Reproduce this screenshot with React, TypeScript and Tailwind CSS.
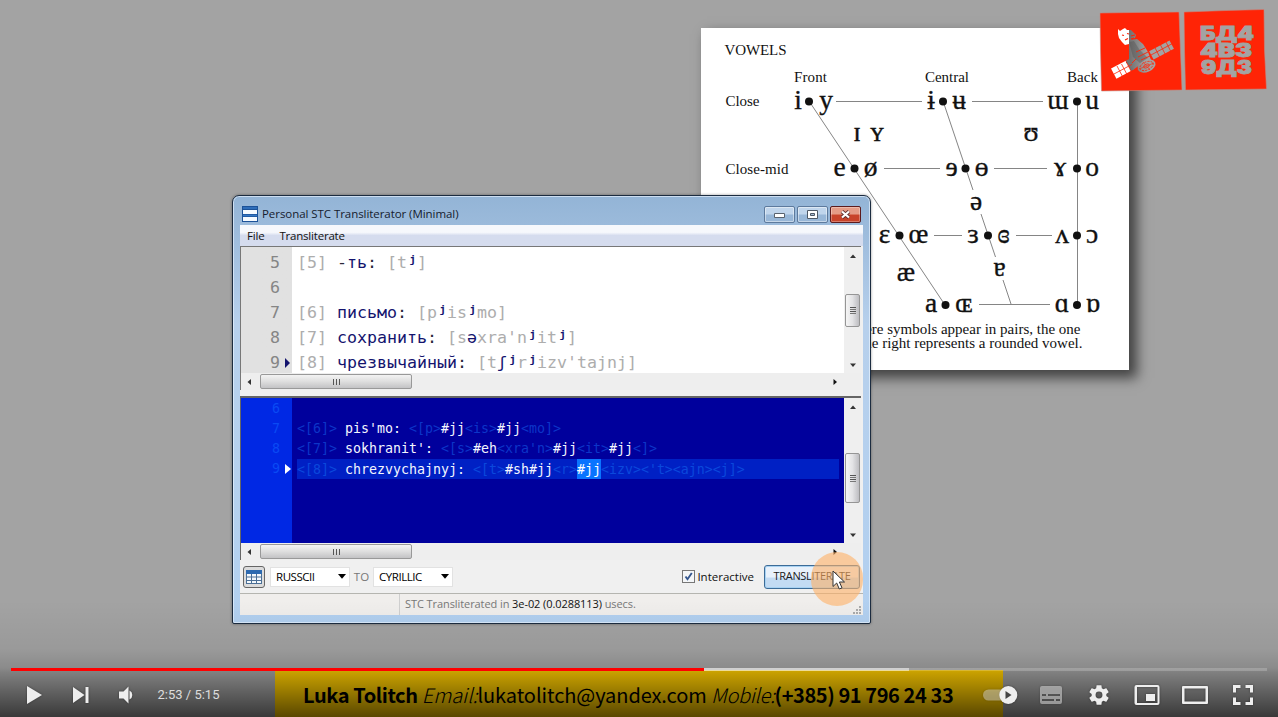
import type { ReactNode } from "react";

/* ---------- Vowel chart ---------- */

const glyphs: [string, number, number][] = [
  ["i", 798, 108.5], ["y", 826, 108.5], ["ɨ", 931, 108.5], ["ʉ", 959, 108.5], ["ɯ", 1058, 108.5], ["u", 1092, 108.5],
  ["ɪ", 857, 140.5], ["ʏ", 877, 140.5], ["ʊ", 1031, 140.5],
  ["e", 839.5, 175.5], ["ø", 870.5, 175.5], ["ɘ", 951.5, 175.5], ["ɵ", 981.5, 175.5], ["ɤ", 1060, 175.5], ["o", 1092, 175.5],
  ["ə", 976, 209.5],
  ["ɛ", 884.5, 242.5], ["œ", 918.5, 242.5], ["ɜ", 973, 242.5], ["ɞ", 1003.5, 242.5], ["ʌ", 1062, 242.5], ["ɔ", 1092, 242.5],
  ["æ", 906, 280.5], ["ɐ", 999.5, 275.5],
  ["a", 931, 311.5], ["ɶ", 964, 311.5], ["ɑ", 1062, 311.5], ["ɒ", 1093, 311.5],
];

const dots: [number, number][] = [
  [809, 101.5], [943, 101.5], [1077, 101.5],
  [854.5, 168.5], [965.5, 168.5], [1077, 168.5],
  [899.5, 235.5], [988, 235.5], [1077, 235.5],
  [945.5, 305], [1077, 305],
];

const lines: [number, number, number, number][] = [
  [836, 101.5, 922, 101.5], [972, 101.5, 1043, 101.5],
  [884, 168.5, 940, 168.5], [994, 168.5, 1047, 168.5],
  [934, 235.5, 962, 235.5], [1016, 235.5, 1052, 235.5],
  [979, 304.5, 1050, 304.5],
  [809, 101, 945, 305], [943, 101, 973, 190], [981, 214, 995.5, 257], [1003, 280, 1011, 304],
  [1077.5, 101, 1077.5, 305],
];

const labels: [string, number, number, number][] = [
  ["VOWELS", 724.5, 55, 62], ["Front", 794, 82, 33], ["Central", 925, 82, 44], ["Back", 1067, 82, 31],
  ["Close", 725.5, 106, 34], ["Close-mid", 725.5, 174, 63],
];

function VowelChart() {
  return (
    <div className="absolute left-[701px] top-[28px] h-[342px] w-[428px] bg-white shadow-[7px_7px_12px_1px_rgba(0,0,0,0.6)]">
      <svg
        viewBox="701 28 428 342"
        width="428"
        height="342"
        className="block font-['Liberation_Serif',serif]"
        fill="#111"
      >
        {lines.map(([a, b, c, d], i) => (
          <line key={i} x1={a} y1={b} x2={c} y2={d} stroke="#858585" strokeWidth="1" />
        ))}
        {dots.map(([x, y], i) => (
          <circle key={i} cx={x} cy={y} r="4" />
        ))}
        {glyphs.map(([g, x, y]) => (
          <text key={g} x={x} y={y} fontSize="27.5" textAnchor="middle" stroke="#111" strokeWidth="0.35">{g}</text>
        ))}
        {labels.map(([t, x, y, w]) => (
          <text key={t} x={x} y={y} fontSize="15" textLength={w}>{t}</text>
        ))}
        <text x="1080.5" y="333.5" fontSize="15" textAnchor="end">Where symbols appear in pairs, the one</text>
        <text x="1082.5" y="348" fontSize="15" textAnchor="end">to the right represents a rounded vowel.</text>
      </svg>
    </div>
  );
}

/* ---------- Channel logo ---------- */

function ChannelLogo() {
  return (
    <svg viewBox="1098 8 170 85" width="170" height="85" className="absolute left-[1098px] top-[8px]">
      <defs>
        <linearGradient id="cut" gradientUnits="userSpaceOnUse" x1="1129" y1="0" x2="1147" y2="0">
          <stop offset="0" stopColor="#ffffff" />
          <stop offset="0.001" stopColor="#707070" />
          <stop offset="1" stopColor="#a3a3a3" />
        </linearGradient>
      </defs>
      <g fill="#ff2406" stroke="#c08c84" strokeWidth="0.6">
        <path d="M1100 13 1140 12.4 1179 12 1180.500 52 1182 90 1140 90.5 1101.500 91 1100.500 50Z" />
        <path d="M1184 12 1226 10.5 1264 9.500 1264.500 50 1266.500 89 1226 89.5 1185.500 90 1184.500 50Z" />
      </g>
      <g fill="url(#cut)">
        <path d="M1118 29l2 2 3-2 2-1 2 2 4 0 3 3 2 2-1 3-3 1-2 3-1 2-4 1-3-3-3-4-1-4z" />
        <path d="M1129 40l8-1 6 5 5 8 3 8-10 4-8 6-4-6z" />
        <g transform="rotate(-28 1161 50)"><path d="M1150 45.500h23v9.500h-23z" /></g>
        <g transform="rotate(-28 1122 69)"><path d="M1112.500 63.500h20v11.500h-20z" /></g>
        <ellipse cx="1146.500" cy="66" rx="9.500" ry="6" transform="rotate(-24 1146.500 66)" />
      </g>
      <path d="M1129 42l5-1 5 8 9 9-8 5-7-6z" fill="#4a4a4a" opacity=".35" />
      <g fill="none" stroke="#ff2406">
        <g strokeWidth="0.8">
          <path d="M1155 47.800l5 9.800M1160.500 45l5 9.800M1166 42l5 9.800M1151 55l21-11.200" />
          <path d="M1117 66l5.500 10.500M1121.500 64l5.500 10.500M1126 61.500l5.500 10.500M1114 74l18-9.600" />
        </g>
        <path d="M1136 52l9-4M1138 57l10-5M1141 60l9-4M1132 63l4-4" strokeWidth="0.9" />
        <path d="M1122 35l2 .5M1127 33.500l2 .5M1125 40l3-1.500M1131 36l4-1M1131 39l3-1" strokeWidth="1.200" />
        <ellipse cx="1146.500" cy="66" rx="7" ry="4" transform="rotate(-24 1146.500 66)" strokeWidth="0.8" strokeDasharray="2 1.200" />
        <ellipse cx="1146.500" cy="66" rx="3" ry="1.800" transform="rotate(-24 1146.500 66)" strokeWidth="0.7" />
        <path d="M1139 69l15-6M1143 62l7 8" strokeWidth="0.6" />
      </g>
      <g fill="#a3a3a3" stroke="#a3a3a3" strokeWidth="0.8" fontSize="18.5" fontWeight="900" className="font-['Inter','Liberation_Sans',sans-serif]">
        <text x="1200" y="39.500" textLength="54" lengthAdjust="spacingAndGlyphs">БД4</text>
        <text x="1200" y="56.700" textLength="52" lengthAdjust="spacingAndGlyphs">4В3</text>
        <text x="1201" y="73.500" textLength="51" lengthAdjust="spacingAndGlyphs">9Д3</text>
      </g>
    </svg>
  );
}

/* ---------- Application window ---------- */

function Arrow({ dir, color = "#333" }: { dir: "up" | "down" | "left" | "right"; color?: string }) {
  const d = {
    up: "M4 2.500 7 6H1z",
    down: "M1 2.500h6L4 6z",
    left: "M6 1v6L2.500 4z",
    right: "M2.500 1v6L6 4z",
  }[dir];
  return (
    <svg width="8" height="8" viewBox="0 0 8 8" className="shrink-0">
      <path d={d} fill={color} />
    </svg>
  );
}

function VScroll({ top, size }: { top: string; size: string }) {
  return (
    <div className="flex w-[17px] shrink-0 flex-col items-center bg-[#efefef] pt-[5px] pb-[4px]">
      <Arrow dir="up" />
      <div className={`${top} ${size} flex w-[15px] shrink-0 flex-col items-center justify-center gap-px rounded-[2px] border border-[#959595] bg-linear-to-r from-[#f5f5f5] via-[#e3e3e5] to-[#bdbdc1]`}>
        <i className="h-px w-[6px] bg-[#555]" />
        <i className="h-px w-[6px] bg-[#777]" />
        <i className="h-px w-[6px] bg-[#555]" />
        <i className="h-px w-[6px] bg-[#777]" />
      </div>
      <div className="grow" />
      <Arrow dir="down" />
    </div>
  );
}

function HScroll() {
  return (
    <div className="flex h-[17px] shrink-0 items-center bg-[#eeeeee] pr-[22px] pl-[4px]">
      <Arrow dir="left" />
      <div className="ml-[7px] flex h-[15px] w-[152px] items-center justify-center gap-[2px] rounded-[2px] border border-[#999] bg-linear-to-b from-[#f3f3f3] via-[#dedede] to-[#c3c3c5]">
        <i className="h-[6px] w-px bg-[#555]" />
        <i className="h-[6px] w-px bg-[#555]" />
        <i className="h-[6px] w-px bg-[#555]" />
      </div>
      <div className="grow" />
      <Arrow dir="right" color="#111" />
    </div>
  );
}

const N = ({ children }: { children: ReactNode }) => <span className="text-[#14146e]">{children}</span>;
const K = ({ children }: { children: ReactNode }) => <span className="text-[#2a2a38]">{children}</span>;
const W = ({ children }: { children: ReactNode }) => <span className="text-[#f4f6ff]">{children}</span>;
const J = () => <span className="font-bold text-[#14146e]">ʲ</span>;

const sourceRows: { n: number; mark?: boolean; body: ReactNode }[] = [
  { n: 5, body: <>[5] <K>-</K><N>ть</N><K>:</K> [t<J />]</> },
  { n: 6, body: null },
  { n: 7, body: <>[6] <N>письмо</N><K>:</K> [p<J />is<J />mo]</> },
  { n: 8, body: <>[7] <N>сохранить</N><K>:</K> [s<N>ə</N>xra'n<J />it<J />]</> },
  { n: 9, mark: true, body: <>[8] <N>чрезвычайный</N><K>:</K> [t<N>ʃ</N><J />r<J />izv'tajnj]</> },
];

const targetRows: { n: number; mark?: boolean; body: ReactNode }[] = [
  { n: 6, body: null },
  { n: 7, body: <>&lt;[6]&gt; <W>pis'mo:</W> &lt;[p&gt;<W>#jj</W>&lt;is&gt;<W>#jj</W>&lt;mo]&gt;</> },
  { n: 8, body: <>&lt;[7]&gt; <W>sokhranit':</W> &lt;[s&gt;<W>#eh</W>&lt;xra'n&gt;<W>#jj</W>&lt;it&gt;<W>#jj</W>&lt;]&gt;</> },
  {
    n: 9,
    mark: true,
    body: (
      <>
        &lt;[8]&gt; <W>chrezvychajnyj:</W> &lt;[t&gt;<W>#sh#jj</W>&lt;r&gt;
        <span className="inline-block h-[20px] bg-[#0a74ff] text-white">#jj</span>
        &lt;izv&gt;&lt;'t&gt;&lt;ajn&gt;&lt;j]&gt;
      </>
    ),
  },
];

function SourceEditor() {
  return (
    <div className="flex h-[126px] overflow-hidden bg-white font-['DejaVu_Sans_Mono',monospace] text-[16.61px]">
      <div className="flex w-[603px] flex-col bg-linear-to-r from-[#e1e1e1] from-[51px] to-white to-[51px] pt-[3px]">
        {sourceRows.map((r) => (
          <div key={r.n} className="flex h-[25px] shrink-0 items-center whitespace-pre leading-[25px]">
            <span className="w-[39px] text-right text-[#858585]">{r.n}</span>
            <span className="flex w-[17px] items-center pl-[4px]">
              {r.mark && (
                <svg width="7" height="10" viewBox="0 0 7 10"><path d="M1 0l5 5-5 5z" fill="#14146e" /></svg>
              )}
            </span>
            <span className="text-[#adadad]">{r.body}</span>
          </div>
        ))}
      </div>
      <VScroll top="mt-[34px]" size="h-[33px]" />
    </div>
  );
}

function TargetEditor() {
  return (
    <div className="flex h-[145px] overflow-hidden font-['DejaVu_Sans_Mono',monospace] text-[13.29px]">
      <div className="flex w-[603px] flex-col bg-linear-to-r from-[#0028e4] from-[51px] to-[#00009c] to-[51px] pt-[1px]">
        {targetRows.map((r) => (
          <div key={r.n} className="flex h-[20px] shrink-0 items-center whitespace-pre leading-[22px]">
            <span className="w-[39px] text-right text-[#0a4af4]">{r.n}</span>
            <span className="flex w-[17px] items-center pl-[5px]">
              {r.mark && (
                <svg width="7" height="10" viewBox="0 0 7 10"><path d="M0 0l6 5-6 5z" fill="#fff" /></svg>
              )}
            </span>
            <span className={r.mark ? "flex h-[20px] w-[542px] bg-[#0020c4] text-[#0b48dc]" : "text-[#0c35c8]"}>{r.body}</span>
          </div>
        ))}
      </div>
      <VScroll top="mt-[42px]" size="h-[50px]" />
    </div>
  );
}

function Select({ label }: { label: string }) {
  return (
    <div className="flex h-[20px] w-[80px] items-center justify-between border border-[#e2e2e2] bg-white pr-[3px] pl-[5px]">
      <span className="tracking-[-0.45px] text-black">{label}</span>
      <svg width="8" height="5" viewBox="0 0 8 5"><path d="M0 0h8L4 4.800z" fill="#000" /></svg>
    </div>
  );
}

function TitleButton({ close, children }: { close?: boolean; children: ReactNode }) {
  return (
    <div
      className={
        close
          ? "flex h-[17px] w-[31px] items-center justify-center rounded-[2px] border border-[#5c1a1c] bg-linear-to-b from-[#e59b86] from-45% to-[#c8432a] to-55% shadow-[inset_0_0_0_1px_rgba(255,255,255,0.3)]"
          : "flex h-[17px] w-[31px] items-center justify-center rounded-[2px] border border-[#5d7a9d] bg-linear-to-b from-[#c0d5ec] from-45% to-[#98b7d8] to-55% shadow-[inset_0_0_0_1px_rgba(255,255,255,0.45)]"
      }
    >
      {children}
    </div>
  );
}

function AppWindow() {
  return (
    <div className="absolute left-[232px] top-[195px] flex h-[429px] w-[639px] flex-col rounded-t-[7px] rounded-b-[2px] border border-[#1c2c40] bg-linear-to-b from-[#93b4d6] via-[#b7d0ec] via-30% to-[#b2d0f0] px-[7px] pb-[8px] font-['Open_Sans','Noto_Sans',sans-serif] text-[11.5px] text-[#111] shadow-[inset_0_0_0_1px_rgba(235,245,255,0.65),0_0_3px_rgba(0,0,0,0.4)]">
      <div className="flex h-[29px] shrink-0 items-center pt-[7px] pl-[2px]">
        <svg width="16" height="16" viewBox="0 0 16 16" className="shrink-0">
          <path d="M0 0h16v16H0z" fill="#1c5298" />
          <path d="M1 4h14v4H1zM1 11h14v4H1z" fill="#f5faff" />
          <path d="M1 2h14M1 9.500h14" stroke="#3577c4" strokeWidth="1.500" />
        </svg>
        <span className="ml-[4px] whitespace-nowrap tracking-[-0.06px] text-[#15202e]">Personal STC Transliterator (Minimal)</span>
        <div className="ml-auto flex gap-[2px] pr-[2px]">
          <TitleButton>
            <svg width="11" height="5" viewBox="0 0 11 5" className="mt-[3px]"><path d="M.5.5h10v4H.5z" fill="#fff" stroke="#59626e" /></svg>
          </TitleButton>
          <TitleButton>
            <svg width="11" height="9" viewBox="0 0 11 9"><path d="M.5.500h10v8H.5z" fill="#fff" stroke="#4e5866" /><path d="M3.500 3.500h4v2h-4z" fill="#a9bdd4" stroke="#4e5866" /></svg>
          </TitleButton>
          <TitleButton close>
            <svg width="11" height="9" viewBox="0 0 11 9"><path d="M2 1.500 9 7.500M9 1.500 2 7.500" stroke="#5d3030" strokeWidth="3.800" /><path d="M2 1.500 9 7.500M9 1.500 2 7.500" stroke="#fff" strokeWidth="2.200" /></svg>
          </TitleButton>
        </div>
      </div>

      <div className="flex h-[390px] w-[623px] flex-col bg-[#f0f0f0]">
        <div className="flex h-[21px] shrink-0 items-center gap-[15px] bg-linear-to-b from-[#f6f8fc] from-35% to-[#d5dcee] to-50% pl-[7px] tracking-[-0.2px]">
          <span>File</span>
          <span>Transliterate</span>
        </div>
        <div className="mr-[2px] flex flex-col border-t border-l border-[#777]">
          <SourceEditor />
          <HScroll />
        </div>
        <div className="mt-[6px] mr-[2px] flex flex-col border-t-2 border-l border-[#666]">
          <TargetEditor />
          <HScroll />
        </div>
        <div className="flex h-[34px] shrink-0 items-center border-b border-[#b5b5b0] pr-[3px] pl-[3px] text-[#777]">
          <div className="flex h-[22px] w-[22px] items-center justify-center rounded-[3px] border border-[#666] bg-[#dcdcdc]">
            <svg width="16" height="14" viewBox="0 0 16 14">
              <path d="M0 0h16v14H0z" fill="#4b6f96" />
              <path d="M0 0h16v4H0z" fill="#2c69b0" />
              <path d="M1 4h4v2.500H1zM6 4h4v2.500H6zM11 4h4v2.500h-4zM1 7.500h4V10H1zM6 7.500h4V10H6zM11 7.500h4V10h-4zM1 11h4v2H1zM6 11h4v2H6zM11 11h4v2h-4z" fill="#f3f8fc" />
            </svg>
          </div>
          <div className="ml-[5px] flex items-center">
            <Select label="RUSSCII" />
            <span className="w-[23px] text-center">TO</span>
            <Select label="CYRILLIC" />
          </div>
          <div className="ml-auto flex items-center">
            <div className="flex h-[13px] w-[13px] items-center justify-center border border-[#777] bg-[#f4f6f8]">
              <svg width="9" height="9" viewBox="0 0 9 9"><path d="M1.500 4.500 3.500 7.200 7.800 1" fill="none" stroke="#34568e" strokeWidth="1.900" /></svg>
            </div>
            <span className="ml-[2px] text-[#111]">Interactive</span>
            <div className="ml-[10px] flex h-[24px] w-[96px] items-center justify-center rounded-[3px] border border-[#3d6c98] bg-linear-to-b from-[#e8f1fb] from-50% to-[#c3dbf3] to-55% text-[11px] tracking-[-0.32px] text-[#1a1a1a] shadow-[inset_0_0_0_1px_#a8d2f2]">
              TRANSLITERATE
            </div>
          </div>
        </div>
        <div className="flex grow items-center bg-[#f0eeec] text-[#777]">
          <div className="h-full w-[160px] border-r border-[#cfcfcf]" />
          <span className="pl-[5px] text-[11px] tracking-[-0.08px] whitespace-pre">
            STC Transliterated in <span className="text-[#111]">3e-02 (0.0288113)</span> usecs.
          </span>
          <svg width="9" height="9" viewBox="0 0 9 9" className="mr-[2px] mb-[1px] ml-auto self-end" fill="#aaa">
            <path d="M7 1h2v2H7zM4 4h2v2H4zM7 4h2v2H7zM1 7h2v2H1zM4 7h2v2H4zM7 7h2v2H7z" />
          </svg>
        </div>
      </div>
    </div>
  );
}

function Pointer() {
  return (
    <div className="absolute left-[811px] top-[552px] h-[54px] w-[52px] rounded-full bg-[#ffb066]/60">
      <svg width="14" height="21" viewBox="0 0 14 21" className="absolute left-[21px] top-[18px]">
        <path d="M1 1v15.500l3.700-3.500 2.600 6 2.700-1.200-2.600-5.800H12.500z" fill="#fff" stroke="#333" strokeWidth="1" />
      </svg>
    </div>
  );
}

/* ---------- Player chrome ---------- */

function Control({ width = 48, children }: { width?: number; children: ReactNode }) {
  return (
    <button className="block shrink-0" type="button">
      <svg width={width} height="46" viewBox={`0 0 ${width} 46`} fill="#eee" className="drop-shadow-[0_0_1px_rgba(0,0,0,0.4)]">
        {children}
      </svg>
    </button>
  );
}

function ContactBanner() {
  return (
    <div className="absolute left-[275px] top-[670px] h-[47px] w-[728px] bg-[#ffcc00] pl-[28px] font-['Noto_Sans_CJK_JP','Noto_Sans',sans-serif] text-[20px] leading-[49px] whitespace-pre text-black">
      <span className="font-bold tracking-[-0.4px]">Luka Tolitch </span>
      <span className="font-light tracking-[-0.05px] italic">Email:</span>
      <span className="tracking-[-0.07px]">lukatolitch@yandex.com </span>
      <span className="font-light tracking-[-0.35px] italic">Mobile:</span>
      <span className="font-bold tracking-[-0.42px]">(+385) 91 796 24 33</span>
    </div>
  );
}

function PlayerControls() {
  return (
    <div className="absolute inset-x-0 bottom-0 flex h-[117px] flex-col justify-end bg-[linear-gradient(to_bottom,rgba(0,0,0,0)_0%,rgba(0,0,0,0.06)_42%,rgba(0,0,0,0.15)_58%,rgba(0,0,0,0.22)_62%,rgba(0,0,0,0.65)_100%)]">
      <div className="mx-[11px] flex h-[3px]">
        <div className="w-[693px] bg-[#ff0000]" />
        <div className="w-[205px] bg-white/60" />
        <div className="grow bg-white/20" />
      </div>
      <div className="flex h-[46px] items-center px-[11px]">
        <Control width={46}><path d="M16 15l15 9-15 9z" /></Control>
        <Control><path d="M16 16l11.500 8L16 32zM28.500 16h3v16h-3z" /></Control>
        <Control width={42}>
          <path d="M14 20.500h4.500l5-5v17l-5-5H14zM24.500 19.500a5 5 0 0 1 0 9z" />
        </Control>
        <span className="ml-[10.500px] pt-[1px] font-['Roboto',sans-serif] text-[13px] text-[#ddd]">2:53 / 5:15</span>
        <div className="grow" />
        <Control width={54}>
          <rect x="10" y="18.500" width="28" height="11" rx="5.500" opacity=".42" />
          <circle cx="35.300" cy="24" r="9" />
          <path d="M32.500 20v8l6-4z" fill="#444" />
        </Control>
        <Control>
          <g opacity=".5">
            <path fillRule="evenodd" d="M15 15h18a2 2 0 0 1 2 2v14a2 2 0 0 1-2 2H15a2 2 0 0 1-2-2V17a2 2 0 0 1 2-2zM15 23v2h4v-2zM21 23v2h12v-2zM15 28v2h12v-2zM29 28v2h4v-2z" />
          </g>
        </Control>
        <Control>
          <g transform="translate(24 24) scale(1.23) translate(-18 -18)">
            <path
              fillRule="evenodd"
              d="m23.94 18.780c.03-.25.05-.51.05-.78 0-.27-.02-.52-.05-.78l1.680-1.320c.15-.12.19-.33.09-.51l-1.600-2.760c-.09-.17-.31-.24-.48-.17l-1.990.8c-.41-.32-.86-.58-1.350-.78l-.3-2.120c-.02-.19-.19-.33-.39-.33h-3.200c-.2 0-.36.14-.39.33l-.3 2.120c-.48.2-.93.47-1.350.78l-1.990-.8c-.18-.07-.39 0-.48.17l-1.600 2.760c-.1.17-.05.39.09.51l1.680 1.320c-.03.25-.05.52-.05.78 0 .26.02.52.05.78l-1.680 1.320c-.15.12-.19.33-.09.51l1.600 2.760c.09.17.31.24.48.17l1.990-.8c.41.32.86.58 1.350.78l.3 2.120c.02.19.19.33.39.33h3.200c.2 0 .36-.14.39-.33l.3-2.120c.48-.2.93-.47 1.350-.78l1.990.8c.18.07.39 0 .48-.17l1.600-2.760c.09-.17.05-.39-.09-.51zM18 20.800a2.800 2.800 0 1 1 0-5.600 2.800 2.800 0 0 1 0 5.600z"
            />
          </g>
        </Control>
        <Control>
          <path fillRule="evenodd" d="M13.500 14h21a2 2 0 0 1 2 2v16a2 2 0 0 1-2 2h-21a2 2 0 0 1-2-2V16a2 2 0 0 1 2-2zM14 16v16h20.500V16zM23 23h9v7h-9z" />
        </Control>
        <Control>
          <path fillRule="evenodd" d="M12 15h24a1 1 0 0 1 1 1v16a1 1 0 0 1-1 1H12a1 1 0 0 1-1-1V16a1 1 0 0 1 1-1zM13.500 17.500v13h21v-13z" />
        </Control>
        <Control>
          <path d="M14 14h7.500v3H17v4.500h-3zM26.500 14H34v7.500h-3V17h-4.500zM14 26.500h3V31h4.500v3H14zM31 26.500h3V34h-7.500v-3H31z" />
        </Control>
      </div>
    </div>
  );
}

export default function App() {
  return (
    <main className="relative h-[717px] w-[1278px] overflow-hidden bg-[#a3a3a3]">
      <VowelChart />
      <ChannelLogo />
      <AppWindow />
      <Pointer />
      <ContactBanner />
      <PlayerControls />
    </main>
  );
}
